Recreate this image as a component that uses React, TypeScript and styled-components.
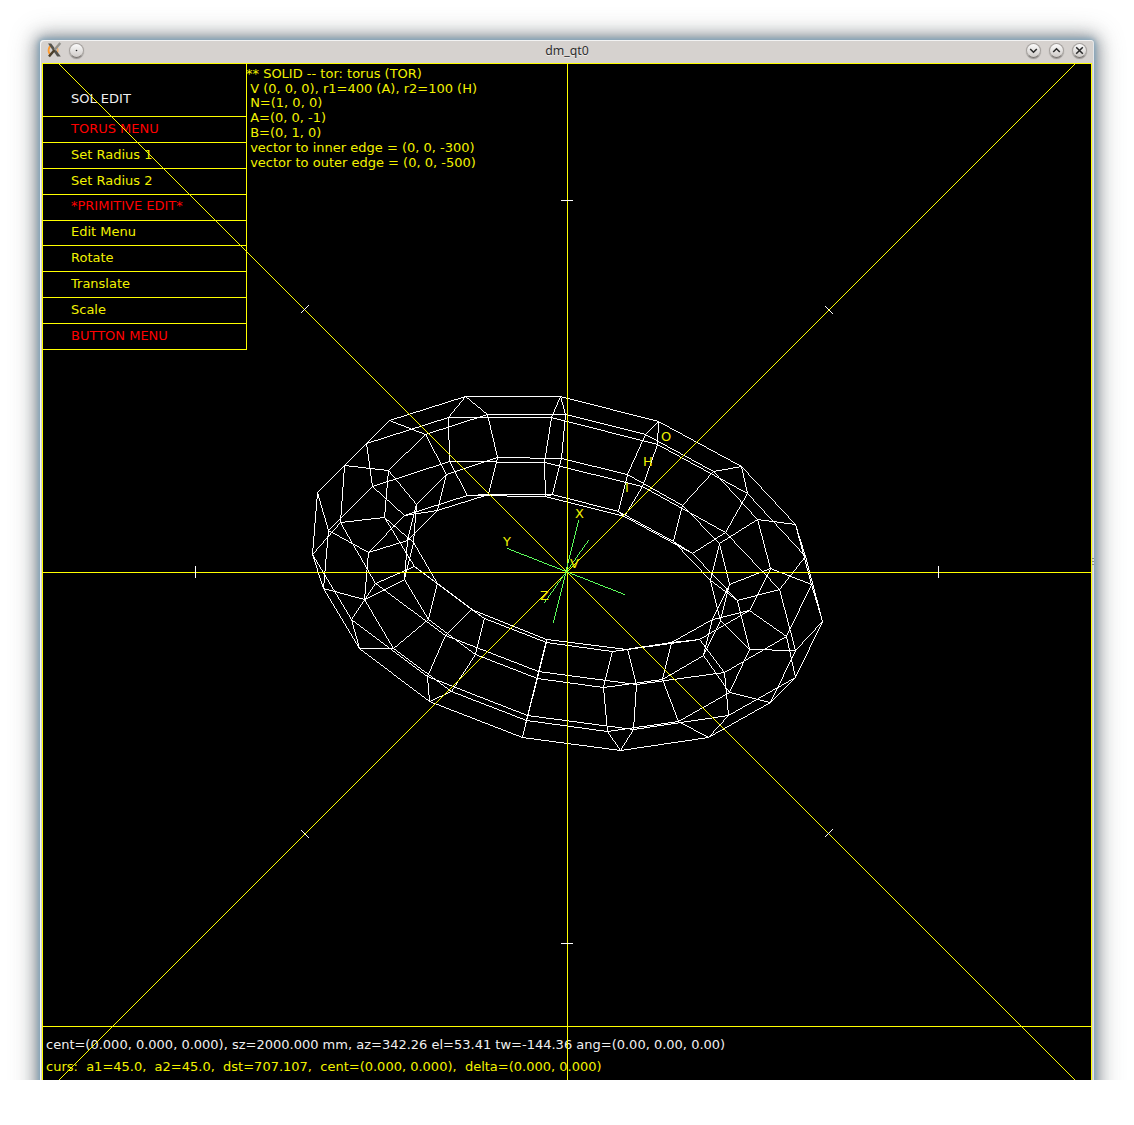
import React from "react";
import styled, { createGlobalStyle, css } from "styled-components";

const YELLOW = "#ffff00";
const TEXT_YELLOW = "#f2f200";
const TEXT_WHITE = "#f0f0f0";
const RED = "#ff0000";

const GlobalStyle = createGlobalStyle`
  html, body { margin: 0; padding: 0; background: #fff; }
`;

/* ---------- geometry ---------- */

type Point = [number, number];
type Vec = [number, number, number];

const ORIGIN: Point = [565.8, 571.1];
const PX_PER_MM = 1048 / 2000;
const rad = (deg: number) => (deg * Math.PI) / 180;
const AZ = rad(342.26);
const EL = rad(53.41);
const TW = rad(144.36);

/* Orthographic view defined by azimuth, elevation and twist. */
function project([x, y, z]: Vec): Point {
  const right = -Math.sin(AZ) * x + Math.cos(AZ) * y;
  const up =
    -Math.sin(EL) * Math.cos(AZ) * x - Math.sin(EL) * Math.sin(AZ) * y + Math.cos(EL) * z;
  const h = right * Math.cos(TW) - up * Math.sin(TW);
  const v = right * Math.sin(TW) + up * Math.cos(TW);
  return [ORIGIN[0] + h * PX_PER_MM, ORIGIN[1] - v * PX_PER_MM];
}

/* One-pixel Bresenham line, emitted as horizontal pixel runs. */
function line([ax, ay]: Point, [bx, by]: Point): string {
  let x = Math.round(ax);
  let y = Math.round(ay);
  const x1 = Math.round(bx);
  const y1 = Math.round(by);
  const dx = Math.abs(x1 - x);
  const dy = -Math.abs(y1 - y);
  const sx = x < x1 ? 1 : -1;
  const sy = y < y1 ? 1 : -1;
  let err = dx + dy;
  let from = x;
  let out = "";
  const flush = (row: number, a: number, b: number) => {
    const l = Math.min(a, b);
    const n = Math.abs(a - b) + 1;
    out += `M${l} ${row}h${n}v1h${-n}z`;
  };
  for (;;) {
    if (x === x1 && y === y1) {
      flush(y, from, x);
      break;
    }
    const e2 = 2 * err;
    const px = x;
    if (e2 >= dy) {
      err += dy;
      x += sx;
    }
    if (e2 <= dx) {
      err += dx;
      flush(y, from, px);
      y += sy;
      from = x;
    }
  }
  return out;
}

const RINGS = 15;
const SIDES = 7;
const R1 = 400;
const R2 = 100;

function torusPoint(ring: number, side: number): Point {
  const t = (2 * Math.PI * ring) / RINGS;
  const p = (2 * Math.PI * side) / SIDES;
  const r = R1 + R2 * Math.cos(p);
  return project([R2 * Math.sin(p), r * Math.sin(t), -r * Math.cos(t)]);
}

const torusPaths: string[] = [];
for (let i = 0; i < RINGS; i++) {
  for (let j = 0; j < SIDES; j++) {
    torusPaths.push(line(torusPoint(i, j), torusPoint(i, j + 1)));
    torusPaths.push(line(torusPoint(i, j), torusPoint(i + 1, j)));
  }
}

const AXIS = 122;
const axisPaths = [
  line(project([-AXIS, 0, 0]), project([AXIS, 0, 0])),
  line(project([0, -AXIS, 0]), project([0, AXIS, 0])),
  line(project([0, 0, -AXIS]), project([0, 0, AXIS])),
];

const cursorPaths = [
  line([43, 572], [1090, 572]),
  line([567, 64], [567, 1079]),
  line([59, 64], [1074, 1079]),
  line([1074, 64], [59, 1079]),
];

const tickPaths = [
  line([561, 200], [572, 200]),
  line([561, 943], [572, 943]),
  line([195, 566], [195, 577]),
  line([938, 566], [938, 577]),
  line([301, 312], [308, 305]),
  line([825, 306], [832, 313]),
  line([301, 830], [308, 837]),
  line([825, 836], [832, 829]),
];

const labels: { text: string; x: number; y: number }[] = [
  { text: "X", x: 575, y: 518 },
  { text: "Y", x: 503, y: 546 },
  { text: "Z", x: 540, y: 600 },
  { text: "V", x: 570, y: 568 },
  { text: "O", x: 661, y: 441 },
  { text: "H", x: 643, y: 466 },
  { text: "I", x: 625, y: 492 },
];

/* ---------- window chrome ---------- */

const Screen = styled.div`
  box-sizing: border-box;
  width: 1134px;
  height: 1080px;
  padding: 40px 40px 0;
  overflow: hidden;
  background: #fff;
`;

const Window = styled.div`
  position: relative;
  box-sizing: border-box;
  width: 1054px;
  height: 1080px;
  padding: 0 2px;
  display: flex;
  flex-direction: column;
  border-radius: 4px 4px 0 0;
  background: #d6d2cf;
  box-shadow:
    inset 1px 1px 0 #f3f3f3,
    inset -1px 0 0 #e4e6e8,
    0 0 5px 1px #7fa6bf,
    0 0 14px 3px rgba(80, 95, 110, 0.55),
    0 0 24px 6px rgba(90, 95, 95, 0.4);
`;

const TitleBar = styled.div`
  flex: none;
  height: 23px;
  padding: 0 5px 3px 5px;
  box-sizing: border-box;
  display: grid;
  grid-template-columns: 1fr auto 1fr;
  grid-template-rows: 20px;
  align-items: center;
`;

const TitleGroup = styled.div<{ $end?: boolean }>`
  display: flex;
  align-items: center;
  gap: ${(p) => (p.$end ? 8 : 7)}px;
  justify-content: ${(p) => (p.$end ? "flex-end" : "flex-start")};
`;

const Title = styled.div`
  font: 12.3px/20px "Noto Sans", "Open Sans", sans-serif;
  color: #2e2e2e;
  text-shadow: 0 1px 0 #efedec;
  padding-top: 2px;
`;

const RoundButton = styled.span`
  display: block;
  box-sizing: border-box;
  width: 15px;
  height: 15px;
  border-radius: 50%;
  border: 1px solid #a5a19e;
  border-bottom-color: #77736f;
  background: linear-gradient(#fbfbfb, #cfcbc8);
  box-shadow: 0 1px 1px rgba(0, 0, 0, 0.3);
  svg {
    display: block;
  }
`;

const glyphs = {
  dot: <circle cx="6.5" cy="6.5" r="0.8" fill="#222" />,
  down: <path d="M3.2 5l3.3 3.3L9.8 5" />,
  up: <path d="M3.2 8l3.3-3.3L9.8 8" />,
  close: <path d="M3.2 3.2l6.6 6.6M9.8 3.2l-6.6 6.6" />,
};

function ChromeButton({ kind }: { kind: keyof typeof glyphs }) {
  return (
    <RoundButton>
      <svg
        width="13"
        height="13"
        viewBox="0 0 13 13"
        fill="none"
        stroke={kind === "dot" ? "none" : "#2a2a2a"}
        strokeWidth="1.5"
      >
        {glyphs[kind]}
      </svg>
    </RoundButton>
  );
}

function AppIcon() {
  return (
    <svg width="15" height="16" viewBox="0 0 15 16" fill="none">
      <path d="M4.5 3.6C1 5 .6 10.5 3.6 12.6" stroke="#ff9a2e" strokeWidth="1.8" />
      <path d="M9 4c2 1.5 2.6 5 1 7.5" stroke="#f7b26a" strokeWidth="1.4" />
      <path d="M1 1.5h3.2L13.8 14.5h-3.6z" fill="#55534d" />
      <path d="M13.3 1L7.5 8" stroke="#93928d" strokeWidth="2.4" />
      <path d="M7.5 8L2 14.6" stroke="#4a3f2c" strokeWidth="2.4" />
    </svg>
  );
}

/* Splitter handle on the right frame edge. */
const Grip = styled.div`
  position: absolute;
  right: 0;
  top: 518px;
  display: grid;
  gap: 2px;
`;

const GripDot = styled.i`
  width: 2px;
  height: 1px;
  background: #8d8d8b;
`;

/* ---------- display area ---------- */

const Display = styled.div`
  position: relative;
  flex: 1;
  box-sizing: border-box;
  border: 1px solid ${YELLOW};
  width: 1050px;
  background: #000;
  color: ${TEXT_YELLOW};
  font: 13px/15px "DejaVu Sans", sans-serif;
  display: flex;
  flex-direction: column;
`;

const Upper = styled.div`
  box-sizing: border-box;
  height: 963px;
  flex: none;
  display: flex;
  align-items: flex-start;
  border-bottom: 1px solid ${YELLOW};
`;

const Menu = styled.div`
  width: 203px;
  border-right: 1px solid ${YELLOW};
`;

const MenuRow = styled.div<{ $tone: "white" | "red" | "yellow"; $h: number; $lift?: boolean }>`
  box-sizing: border-box;
  height: ${(p) => p.$h}px;
  padding: 0 0 ${(p) => (p.$lift ? 7 : 6)}px 28px;
  display: flex;
  align-items: flex-end;
  border-bottom: 1px solid ${YELLOW};
  color: ${(p) => ({ white: TEXT_WHITE, red: RED, yellow: TEXT_YELLOW })[p.$tone]};
  ${(p) =>
    p.$tone === "white" &&
    css`
      padding-bottom: 10px;
    `}
`;

const Report = styled.div`
  padding-top: 2px;
  margin-left: -1px;
  white-space: pre;
`;

const ReportLine = styled.div<{ $tight?: boolean }>`
  height: ${(p) => (p.$tight ? 14 : 15)}px;
  line-height: 15px;
`;

const Status = styled.div`
  padding: 10px 0 0 3px;
  display: flex;
  flex-direction: column;
  gap: 7px;
  white-space: pre;
`;

const StatusLine = styled.div<{ $white?: boolean }>`
  color: ${(p) => (p.$white ? TEXT_WHITE : TEXT_YELLOW)};
`;

const Drawing = styled.svg`
  position: absolute;
  left: -1px;
  top: -1px;
  font: 13px "DejaVu Sans", sans-serif;
`;

const menu: { text: string; tone: "white" | "red" | "yellow"; h: number; lift?: boolean }[] = [
  { text: "SOL EDIT", tone: "white", h: 53 },
  { text: "TORUS MENU", tone: "red", h: 26 },
  { text: "Set Radius 1", tone: "yellow", h: 26 },
  { text: "Set Radius 2", tone: "yellow", h: 26 },
  { text: "*PRIMITIVE EDIT*", tone: "red", h: 26, lift: true },
  { text: "Edit Menu", tone: "yellow", h: 25 },
  { text: "Rotate", tone: "yellow", h: 26 },
  { text: "Translate", tone: "yellow", h: 26 },
  { text: "Scale", tone: "yellow", h: 26 },
  { text: "BUTTON MENU", tone: "red", h: 26 },
];

const report = [
  "** SOLID -- tor: torus (TOR)",
  " V (0, 0, 0), r1=400 (A), r2=100 (H)",
  " N=(1, 0, 0)",
  " A=(0, 0, -1)",
  " B=(0, 1, 0)",
  " vector to inner edge = (0, 0, -300)",
  " vector to outer edge = (0, 0, -500)",
];

export default function App() {
  return (
    <Screen>
      <GlobalStyle />
      <Window>
        <TitleBar>
          <TitleGroup>
            <AppIcon />
            <ChromeButton kind="dot" />
          </TitleGroup>
          <Title>dm_qt0</Title>
          <TitleGroup $end>
            <ChromeButton kind="down" />
            <ChromeButton kind="up" />
            <ChromeButton kind="close" />
          </TitleGroup>
        </TitleBar>
        <Display>
          <Upper>
            <Menu>
              {menu.map((m) => (
                <MenuRow key={m.text} $tone={m.tone} $h={m.h} $lift={m.lift}>
                  {m.text}
                </MenuRow>
              ))}
            </Menu>
            <Report>
              {report.map((r, i) => (
                <ReportLine key={r} $tight={i === 1}>
                  {r}
                </ReportLine>
              ))}
            </Report>
          </Upper>
          <Status>
            <StatusLine $white>
              cent=(0.000, 0.000, 0.000), sz=2000.000 mm, az=342.26 el=53.41 tw=-144.36 ang=(0.00, 0.00, 0.00)
            </StatusLine>
            <StatusLine>
              {"curs:  a1=45.0,  a2=45.0,  dst=707.107,  cent=(0.000, 0.000),  delta=(0.000, 0.000)"}
            </StatusLine>
          </Status>
          <Drawing width="1050" height="1017" viewBox="42 63 1050 1017" shapeRendering="crispEdges">
            <path d={torusPaths.join("")} fill="#fff" />
            <path d={cursorPaths.join("")} fill={YELLOW} />
            <path d={tickPaths.join("")} fill="#fff" />
            <path d={axisPaths.join("")} fill="#5cff5c" />
            {labels.map((l) => (
              <text key={l.text} x={l.x} y={l.y} fill={TEXT_YELLOW}>
                {l.text}
              </text>
            ))}
          </Drawing>
        </Display>
        <Grip>
          <GripDot />
          <GripDot />
          <GripDot />
        </Grip>
      </Window>
    </Screen>
  );
}
